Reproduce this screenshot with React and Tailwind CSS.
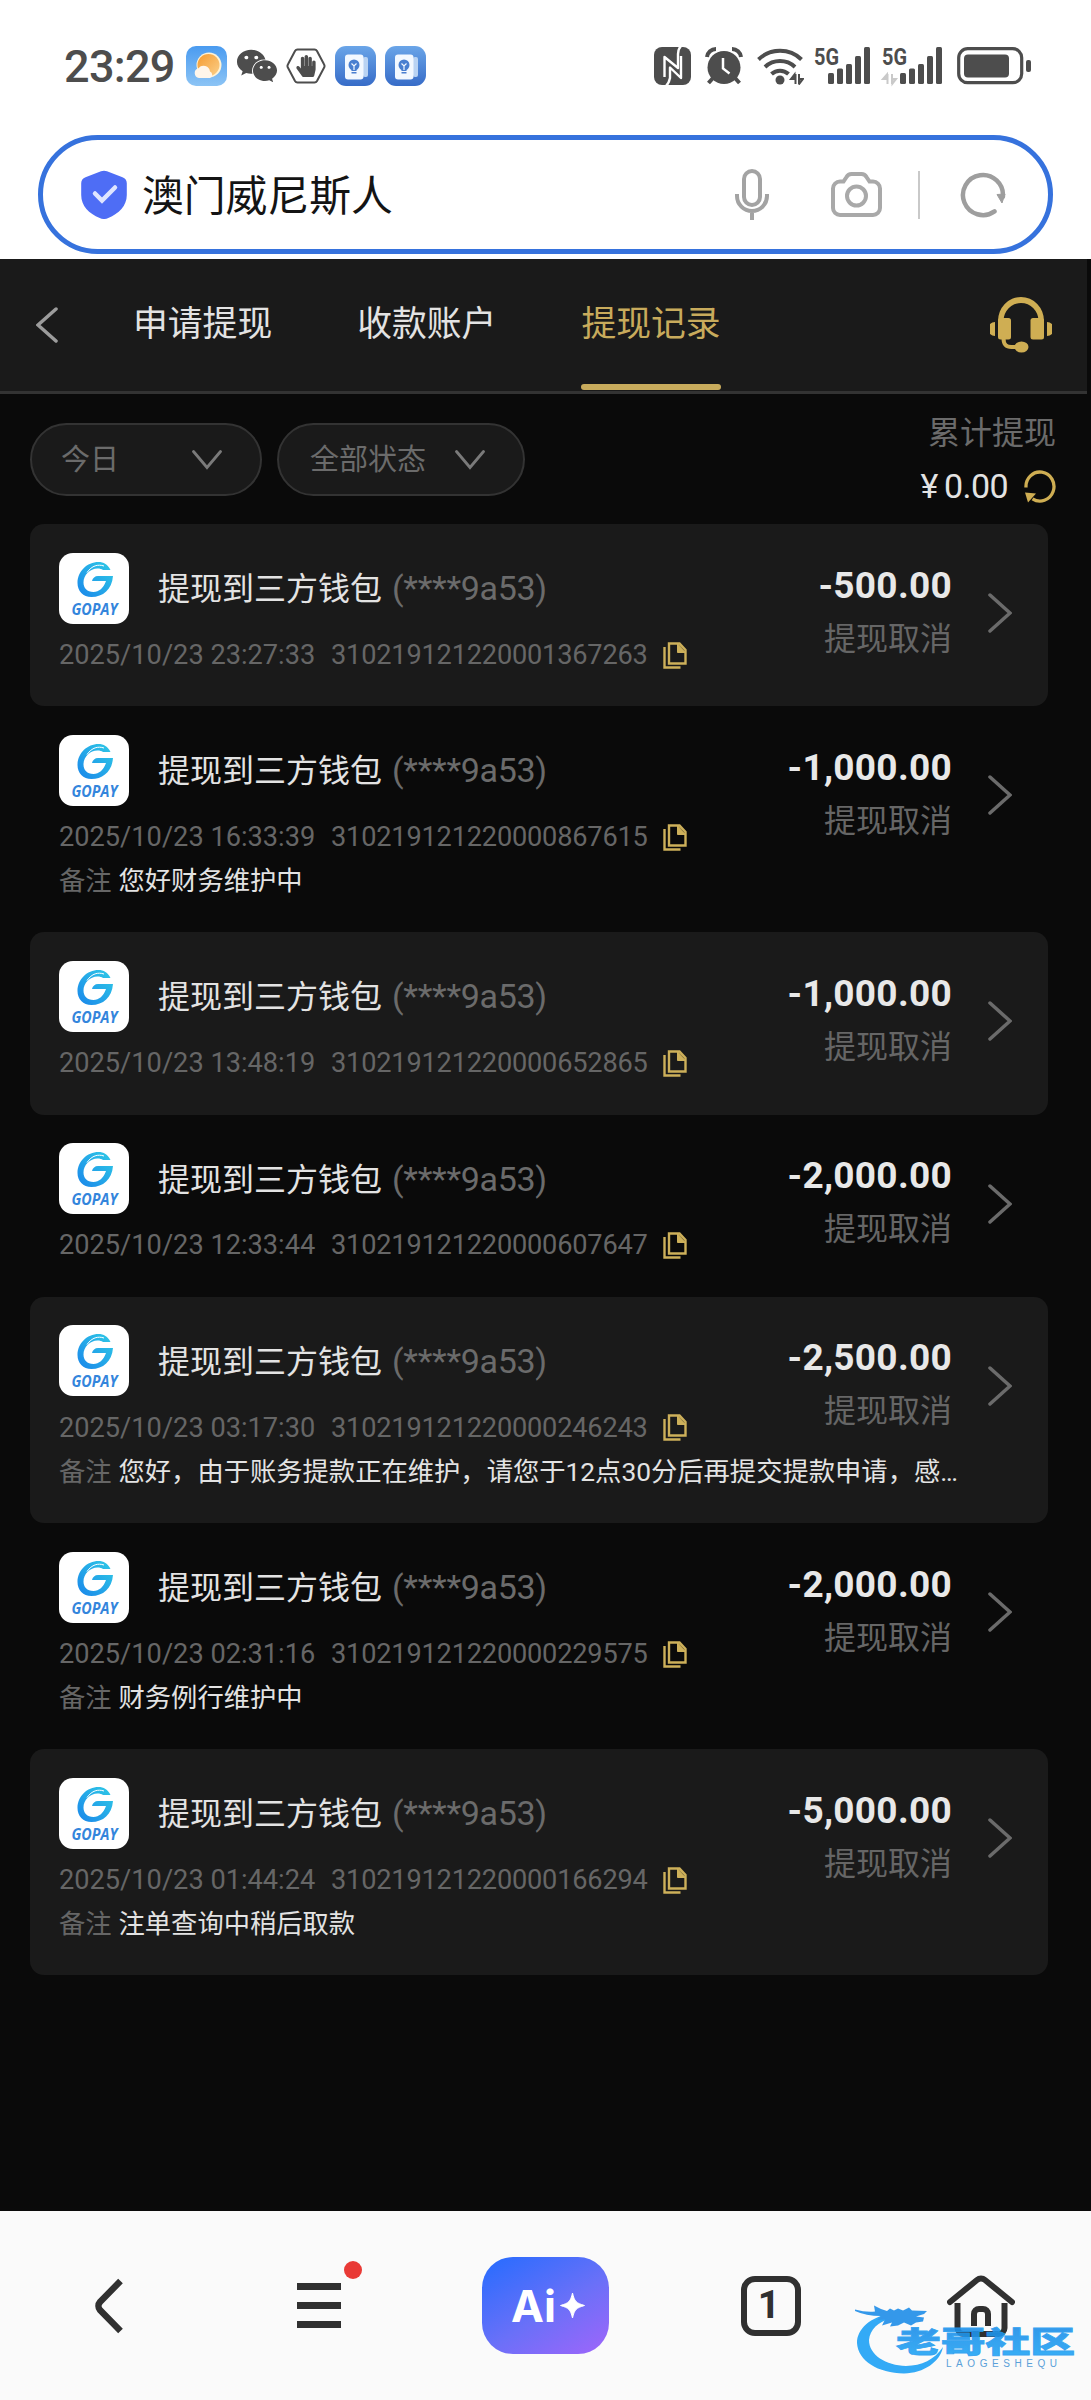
import React from "react";
import { FaWeixin, FaHandPaper } from "react-icons/fa";

const records = [
  { id: "310219121220001367263", time: "2025/10/23 23:27:33", amount: "-500.00" },
  {
    id: "310219121220000867615",
    time: "2025/10/23 16:33:39",
    amount: "-1,000.00",
    remark: "您好财务维护中",
  },
  { id: "310219121220000652865", time: "2025/10/23 13:48:19", amount: "-1,000.00" },
  { id: "310219121220000607647", time: "2025/10/23 12:33:44", amount: "-2,000.00" },
  {
    id: "310219121220000246243",
    time: "2025/10/23 03:17:30",
    amount: "-2,500.00",
    remark: "您好，由于账务提款正在维护，请您于12点30分后再提交提款申请，感…",
  },
  {
    id: "310219121220000229575",
    time: "2025/10/23 02:31:16",
    amount: "-2,000.00",
    remark: "财务例行维护中",
  },
  {
    id: "310219121220000166294",
    time: "2025/10/23 01:44:24",
    amount: "-5,000.00",
    remark: "注单查询中稍后取款",
  },
];

/**STATUS BAR */
const WeatherIcon = () => (
  <svg width="41" height="40" viewBox="0 0 41 40">
    <defs>
      <linearGradient id="sky" x1="0" y1="0" x2="0" y2="1">
        <stop offset="0" stopColor="#4a9bf0" />
        <stop offset="1" stopColor="#8cc4f5" />
      </linearGradient>
      <linearGradient id="sun" x1="0" y1="0" x2="1" y2="1">
        <stop offset="0" stopColor="#f59a2f" />
        <stop offset="1" stopColor="#fbd08a" />
      </linearGradient>
    </defs>
    <rect width="41" height="40" rx="10" fill="url(#sky)" />
    <circle cx="23" cy="19" r="12.5" fill="#fff3d6" />
    <circle cx="22.5" cy="19" r="11" fill="url(#sun)" />
    <path
      d="M13 32a5 5 0 0 1-.5-9.800a6.500 6.500 0 0 1 11.500 3.300a3.500 3.500 0 0 1 0 6.500z"
      fill="#fff6ea"
    />
  </svg>
);

const HandIcon = () => (
  <div className="relative flex h-9 w-10 items-center justify-center">
    <svg className="absolute inset-0" width="40" height="36" viewBox="0 0 40 36">
      <path
        d="M11.500 1.500h17a3 3 0 0 1 2.500 1.500l7 13.200a3.500 3.500 0 0 1 0 3.600l-7 13.200a3 3 0 0 1-2.500 1.500h-17a3 3 0 0 1-2.500-1.500l-7-13.200a3.500 3.500 0 0 1 0-3.600l7-13.200a3 3 0 0 1 2.500-1.500z"
        fill="none"
        stroke="#4d4d4d"
        strokeWidth="2"
      />
    </svg>
    <FaHandPaper size={22} />
  </div>
);

const CardsIcon = () => (
  <svg width="41" height="40" viewBox="0 0 41 40">
    <defs>
      <linearGradient id="cards" x1="0" y1="0" x2="0" y2="1">
        <stop offset="0" stopColor="#6aa5e8" />
        <stop offset="1" stopColor="#376cc8" />
      </linearGradient>
    </defs>
    <rect width="41" height="40" rx="11" fill="url(#cards)" />
    <rect x="28" y="11" width="5" height="20" rx="2" fill="#b9d3f3" />
    <rect x="10" y="8.500" width="18.500" height="25" rx="3" fill="#f2f8ff" />
    <circle cx="19" cy="19" r="5.500" fill="#4a7fd0" />
    <path d="M16.500 23h5v4.500h-5z" fill="#4a7fd0" />
    <path d="M16.500 17.500l2.500 2.500l2.500-2.500M19 20v4M16 25.500h6" stroke="#f2f8ff" strokeWidth="1.200" fill="none" />
  </svg>
);

const NfcIcon = () => (
  <svg width="37" height="38" viewBox="0 0 37 38">
    <rect width="37" height="38" rx="8" fill="#4d4d4d" />
    <g fill="none" stroke="#fff" strokeWidth="2.400" strokeLinejoin="round">
      <path d="M10.500 30V10L24 21V7q0-5 3-8" />
      <path d="M27 9v22L16 20.500V31q-1 5-4 8" />
    </g>
  </svg>
);

const AlarmIcon = () => (
  <svg width="38" height="38" viewBox="0 0 38 38" fill="none" stroke="#4d4d4d">
    <circle cx="19" cy="20.500" r="16.500" fill="#4d4d4d" stroke="none" />
    <path d="M2 10a9 9 0 0 1 9-8M36 10a9 9 0 0 0-9-8" strokeWidth="4" />
    <path d="M8 31l-4.500 5M30 31l4.500 5" strokeWidth="4" />
    <path d="M18 11v10.500l6.500 5" stroke="#fff" strokeWidth="2.500" />
  </svg>
);

const WifiIcon = () => (
  <svg width="47" height="37" viewBox="0 0 47 37" fill="none" stroke="#4d4d4d">
    <path d="M1.500 11.500a31 31 0 0 1 43 0" strokeWidth="4" />
    <path d="M8 19a22 22 0 0 1 30 0" strokeWidth="4" />
    <path d="M14.500 26a12.500 12.500 0 0 1 17 0" strokeWidth="4" />
    <circle cx="23" cy="32" r="4.500" fill="#4d4d4d" stroke="none" />
    <path d="M38.500 26v10M34 31h3.500V26.500zM42 26v10M46 31h-3.500v4.500z" strokeWidth="2" />
  </svg>
);

const Signal = ({ faded }) => (
  <svg className="shrink-0 overflow-visible" width="62" height="40" viewBox="0 0 62 40" fill="#4d4d4d">
    <text
      x="0"
      y="19"
      textLength="25"
      lengthAdjust="spacingAndGlyphs"
      className="font-[Roboto] text-[24px] font-bold"
    >
      5G
    </text>
    {faded && (
      <path
        d="M5.500 28v10M1 33h4V28.500zM10 28v10M14 33h-3.500v4.500z"
        fill="none"
        stroke="#c9c9c9"
        strokeWidth="2"
      />
    )}
    <g transform={faded ? "translate(4 0)" : undefined}>
      <rect x="14" y="27" width="6" height="11" rx="1.500" />
      <rect x="23" y="22.500" width="6" height="15.500" rx="1.500" />
      <rect x="32" y="18" width="6" height="20" rx="1.500" />
      <rect x="41" y="10" width="6" height="28" rx="1.500" />
      <rect x="50" y="1" width="6" height="37" rx="1.500" />
    </g>
  </svg>
);

const BatteryIcon = () => (
  <svg width="75" height="38" viewBox="0 0 75 38">
    <rect x="1.700" y="1.700" width="63" height="34" rx="9" fill="none" stroke="#4d4d4d" strokeWidth="3.200" />
    <rect x="7" y="7.500" width="45" height="23" rx="4" fill="#4d4d4d" />
    <rect x="69" y="13" width="5" height="12" rx="2" fill="#4d4d4d" />
  </svg>
);

const StatusBar = () => (
  <div className="flex h-[135px] items-start pl-[64px] pt-[46px] text-[#4d4d4d]">
    <div className="flex h-10 items-center">
      <span className="w-[122px] pt-[2px] text-[45px] leading-10 font-medium tracking-[-0.700px]">23:29</span>
      <WeatherIcon />
      <FaWeixin className="ml-[9px]" size={42} />
      <div className="ml-2 flex items-center gap-[9px]">
        <HandIcon />
        <CardsIcon />
        <CardsIcon />
      </div>
    </div>
    <div className="ml-[228px] flex h-10 items-center">
      <NfcIcon />
      <div className="ml-[14px]">
        <AlarmIcon />
      </div>
      <div className="ml-[14px]">
        <WifiIcon />
      </div>
      <div className="ml-[10px] flex gap-[6px]">
        <Signal />
        <Signal faded />
      </div>
      <div className="ml-[13px]">
        <BatteryIcon />
      </div>
    </div>
  </div>
);

/**ADDRESS BAR */
const AddressBar = () => (
  <div className="mx-[38px] mb-[5px] flex h-[119px] items-center rounded-full border-5 border-[#3672dd] pl-[38px] pr-[42px]">
    <svg width="46" height="49" viewBox="0 0 46 49">
      <path
        d="M20 1.200a9 9 0 0 1 6 0l15.500 6a6.500 6.500 0 0 1 4.300 6V25c0 11-8 18.500-18.500 23a10 10 0 0 1-8.600 0C8 43.500.200 36 .200 25V13.200a6.500 6.500 0 0 1 4.300-6z"
        fill="#4e6df5"
      />
      <path d="M14 23.500l7 7l13-13" fill="none" stroke="#dfe5ff" strokeWidth="4.500" strokeLinecap="round" />
    </svg>
    <span className="ml-[15px] flex-1 pt-[4px] text-[41.800px] leading-[60px] text-[#141414]">澳门威尼斯人</span>
    <svg width="34" height="51" viewBox="0 0 34 51" fill="none" stroke="#a3a3a3" strokeWidth="4">
      <rect x="9" y="2" width="16" height="34" rx="8" />
      <path d="M2 25v2a15 15 0 0 0 30 0v-2M17 42v9" />
    </svg>
    <svg className="ml-[62px]" width="51" height="45" viewBox="0 0 51 45" fill="none" stroke="#a9a9a9" strokeWidth="4">
      <path d="M9 9.500h3.500l3-4.500a6 6 0 0 1 5-3h10a6 6 0 0 1 5 3l3 4.500H42a7 7 0 0 1 7 7V36a7 7 0 0 1-7 7H9a7 7 0 0 1-7-7V16.500a7 7 0 0 1 7-7z" />
      <circle cx="25.500" cy="24" r="9.500" />
    </svg>
    <div className="ml-[36px] h-12 w-0.5 bg-[#c9c9c9]"></div>
    <svg className="ml-[40px]" width="46" height="46" viewBox="0 0 46 46" fill="none" stroke="#9e9e9e" strokeWidth="4.500">
      <path d="M34.500 39.400A20 20 0 1 1 42.900 24.700" strokeLinecap="round" />
      <path d="M37 22.500l5 8.500l3-9z" fill="#9e9e9e" strokeWidth="1" />
    </svg>
  </div>
);

/**TABS */
const Tab = ({ label, active }) => (
  <div
    className={
      active
        ? "flex h-full flex-col items-center justify-between text-[#c8ab5c]"
        : "flex h-full flex-col items-center justify-between text-[#e3e3e3]"
    }
  >
    <span className="pt-[35px] text-[34.800px] leading-[60px]">{label}</span>
    {active && <div className="mb-px h-[6px] w-full rounded-full bg-[#c8ab5c]"></div>}
  </div>
);

const Header = () => (
  <div className="mr-1 flex h-[135px] items-center border-b-3 border-[#333333] bg-[#1a1a1a] pl-[36px] pr-[35px]">
    <svg width="22" height="36" viewBox="0 0 22 36" fill="none" stroke="#9c9c9c" strokeWidth="3.500" strokeLinecap="round">
      <path d="M20 2L2 18l18 16" />
    </svg>
    <div className="ml-[75px] flex h-full flex-1 gap-[85px]">
      <Tab label="申请提现" />
      <Tab label="收款账户" />
      <Tab label="提现记录" active />
    </div>
    <svg width="62" height="56" viewBox="0 0 62 56" fill="#cfae53">
      <path d="M8 24a23 24 0 0 1 46 0h-5.500a17.500 18 0 0 0-35 0z" />
      <rect x="8" y="21" width="13" height="21.500" rx="2.500" />
      <rect x="40.500" y="21" width="13.500" height="21.500" rx="2.500" />
      <path d="M5 25v14a7 7 0 0 1 0-14zM57 25v14a7 7 0 0 0 0-14z" />
      <path d="M13.500 41c0 7 3 9 8 9h6" fill="none" stroke="#cfae53" strokeWidth="4" />
      <ellipse cx="31.500" cy="50" rx="7" ry="5.500" />
    </svg>
  </div>
);

/**FILTERS */
const Chevron = () => (
  <svg width="30" height="20" viewBox="0 0 30 20" fill="none" stroke="#7a7a7a" strokeWidth="2.800" strokeLinecap="round">
    <path d="M1.500 1.500L15 17.500L28.500 1.500" />
  </svg>
);

const Filters = () => (
  <div className="flex h-[130px] items-start pl-[30px] pr-[35px] text-[#6b6b6b]">
    <div className="mt-[29px] flex h-[73px] w-[232px] items-center justify-between rounded-full border-2 border-[#333333] bg-[#1a1a1a] pl-[29px] pr-[38px] text-[29px]">
      <span className="pt-[3px]">今日</span>
      <Chevron />
    </div>
    <div className="mt-[29px] ml-[15px] flex h-[73px] w-[248px] items-center justify-between rounded-full border-2 border-[#333333] bg-[#1a1a1a] pl-[31px] pr-[38px] text-[29px]">
      <span className="pt-[3px]">全部状态</span>
      <Chevron />
    </div>
    <div className="ml-auto flex flex-col items-end pt-[13px]">
      <span className="text-[32px] leading-[53px]">累计提现</span>
      <div className="flex h-[52px] items-center">
        <span className="text-[34px] leading-[52px] tracking-[-0.600px] text-[#e3e3e3]">
          ¥&thinsp;0.00
        </span>
        <svg className="ml-4" width="32" height="33" viewBox="0 0 32 33" fill="none" stroke="#cfae53" strokeWidth="3.300">
          <path d="M2 17.500A14 14.500 0 1 1 8.500 28.800" />
          <path d="M1 22.500l11 1l-8 9z" fill="#cfae53" stroke="none" />
        </svg>
      </div>
    </div>
  </div>
);

/**RECORDS */
const GopayLogo = () => (
  <svg className="shrink-0" width="70" height="71" viewBox="0 0 70 71">
    <defs>
      <linearGradient id="gopay" x1="0" y1="1" x2="1" y2="0">
        <stop offset="0" stopColor="#1a86ea" />
        <stop offset="1" stopColor="#2fcbe6" />
      </linearGradient>
    </defs>
    <rect width="70" height="71" rx="14" fill="#fff" />
    <path
      d="M51.500 17C49 11.500 44.500 9 39.500 9C28 9 18.500 18.500 18.500 30C18.500 38 24 44 32.500 44C44 44 53 36.500 54 23H39C36 23 33.500 25 33 28H47C44.500 35 40 39 34.500 39C28 39 24.500 35 24.500 29.500C24.500 22 31 15.500 38.500 15.500C41 15.500 42.500 16 44 17z"
      fill="url(#gopay)"
    />
    <path d="M28 19.500C33 12.500 39 11 45 13" fill="none" stroke="#fff" strokeWidth="1" />
    <text
      x="12.500"
      y="62"
      textLength="46"
      lengthAdjust="spacingAndGlyphs"
      fill="#3385dc"
      className="font-['Open_Sans'] text-[15.500px] font-bold italic"
    >
      GOPAY
    </text>
  </svg>
);

const CopyIcon = () => (
  <svg width="24" height="27" viewBox="0 0 24 27" fill="none" stroke="#cdb05a" strokeWidth="2.400">
    <path d="M6 1.500h10.500l6 6.500v13.500H6z" />
    <path d="M14.500 1.500V10.500h8z" fill="#cdb05a" strokeWidth="1" />
    <path d="M1.500 5v20.500h16" />
  </svg>
);

const Record = ({ record, filled }) => (
  <div className={filled ? "rounded-[14px] bg-[#1a1a1a] pl-[29px] pr-[36px] pt-[28.500px] pb-[32.800px]" : "pl-[29px] pr-[36px] pt-[28.500px] pb-[32.800px]"}>
    <div className="flex h-[121px] items-center">
      <div className="h-full flex-1">
        <div className="flex h-[71px] items-center">
          <GopayLogo />
          <span className="ml-[29px] pt-[2px] text-[32px] leading-[50px] text-[#e3e3e3]">提现到三方钱包</span>
          <span className="ml-[10px] text-[34px] leading-[50px] tracking-[-0.300px] text-[#6b6b6b]">
            (****9a53)
          </span>
        </div>
        <div className="flex h-[50px] items-center pt-[13px] text-[27.200px] text-[#666666]">
          <span className="w-[272px]">{record.time}</span>
          <span className="w-[332px] tracking-[-0.200px]">{record.id}</span>
          <CopyIcon />
        </div>
      </div>
      <div className="flex flex-col items-end pb-px">
        <span className="text-[37px] leading-[53px] font-bold tracking-[0.300px] text-[#e8e8e8]">{record.amount}</span>
        <span className="text-[32px] leading-[55px] text-[#666666]">提现取消</span>
      </div>
      <svg className="ml-[36px]" width="24" height="40" viewBox="0 0 24 40" fill="none" stroke="#6b6b6b" strokeWidth="3.500" strokeLinecap="round">
        <path d="M2 2l20 18L2 38" />
      </svg>
    </div>
    {record.remark && (
      <div className="flex h-[43.800px] items-center pt-[9px] text-[26.300px] whitespace-nowrap">
        <span className="w-[59.500px] text-[#666666]">备注</span>
        <span className="text-[#e3e3e3]">{record.remark}</span>
      </div>
    )}
  </div>
);

/**BOTTOM NAV */
const Watermark = () => (
  <svg className="absolute right-[8px] bottom-[20px] opacity-90" width="233" height="82" viewBox="848 2298 233 82">
    <defs>
      <linearGradient id="mark" x1="0" y1="0" x2="0" y2="1">
        <stop offset="0" stopColor="#1d86e4" />
        <stop offset="1" stopColor="#22aaf8" />
      </linearGradient>
    </defs>
    <path
      d="M890 2313C868 2317 855 2329 855 2343C856 2361 876 2373 902 2373.500C922 2373 938 2362 941 2347C932 2360 920 2365.500 904 2366C884 2365.500 867 2355 867 2340C868 2330 876 2321 889 2319z"
      fill="#1ea2f6"
    />
    <path
      d="M853 2309.500q11 3 20 2l-1-6q7 4 13 5.500l3-2.500l4 2l4-2l5 2l6-3l3 3l15 0.500l-3 3l-8 2.500l8 1l-1 4l-7 1l-5 3l-7-3l-6 3l-8 1l2-4l-10 3l3-6l-8 0.500l4-4q-15 0-26-5z"
      fill="#1f8ee9"
    />
    <text
      x="894"
      y="2352.500"
      textLength="179"
      lengthAdjust="spacingAndGlyphs"
      fill="url(#mark)"
      stroke="#239af0"
      strokeWidth="0.800"
      className="font-['Noto_Sans_CJK_SC'] text-[29px] font-black"
    >
      老哥社区
    </text>
    <text x="944" y="2367" textLength="111" fill="#4a97d6" className="font-['Liberation_Sans'] text-[10px]">
      LAOGESHEQU
    </text>
  </svg>
);

const BottomNav = () => (
  <div className="relative flex h-[189px] items-center bg-[#fafafa] pl-[94px]">
    <svg width="30" height="56" viewBox="0 0 30 56" fill="none" stroke="#303030" strokeWidth="6.500">
      <path d="M26.500 3L6 24a6 6 0 0 0 0 8l20.500 21" />
    </svg>
    <div className="relative ml-[173px] flex h-[45px] w-11 flex-col justify-between">
      <div className="h-[7px] bg-[#303030]"></div>
      <div className="h-[7px] bg-[#303030]"></div>
      <div className="h-[7px] bg-[#303030]"></div>
      <div className="absolute -top-[22px] left-[47px] h-[18px] w-[18px] rounded-full bg-[#e93a36]"></div>
    </div>
    <svg className="ml-[141px]" width="127" height="97" viewBox="0 0 127 97">
      <defs>
        <linearGradient id="ai" x1="0.100" y1="0" x2="0.900" y2="1">
          <stop offset="0" stopColor="#2a6cfe" />
          <stop offset="0.550" stopColor="#6a70f8" />
          <stop offset="1" stopColor="#9a66fa" />
        </linearGradient>
      </defs>
      <rect width="127" height="97" rx="31" fill="url(#ai)" />
      <text x="29" y="65" textLength="45" lengthAdjust="spacingAndGlyphs" fill="#fff" className="font-[Inter] text-[44px] font-bold">
        Ai
      </text>
      <path d="M90.500 36c2 8.500 3.500 10 12 12.500c-8.500 2.500-10 4-12 12.500c-2-8.500-3.500-10-12-12.500c8.500-2.500 10-4 12-12.500z" fill="#fff" stroke="#fff" />
    </svg>
    <div className="ml-[132px] flex h-[60px] w-[60px] items-center justify-center rounded-[14px] border-6 border-[#303030] pr-1 text-[39px] leading-none font-bold text-[#303030]">
      1
    </div>
    <svg className="ml-[146px]" width="68" height="62" viewBox="0 0 68 62" fill="none" stroke="#303030" strokeWidth="6">
      <path d="M3 27L30 5a6.500 6.500 0 0 1 8 0l27 22" strokeLinecap="round" />
      <path d="M10.500 28v25a6 6 0 0 0 6 6h35a6 6 0 0 0 6-6V28" />
      <path d="M27 51V39a5 5 0 0 1 5-5h4a5 5 0 0 1 5 5v12" />
    </svg>
    <Watermark />
  </div>
);

/**Parent Component */
function App() {
  return (
    <div className="flex h-[2400px] w-[1091px] flex-col overflow-hidden bg-white font-[Roboto,'Noto_Sans_CJK_SC',sans-serif]">
      <StatusBar />
      <AddressBar />
      <div className="flex-1 bg-[#0a0a0a]">
        <Header />
        <Filters />
        <div className="mr-[43px] ml-[30px]">
          {records.map((record, i) => (
            <Record key={record.id} record={record} filled={i % 2 === 0} />
          ))}
        </div>
      </div>
      <BottomNav />
    </div>
  );
}

export default App;
